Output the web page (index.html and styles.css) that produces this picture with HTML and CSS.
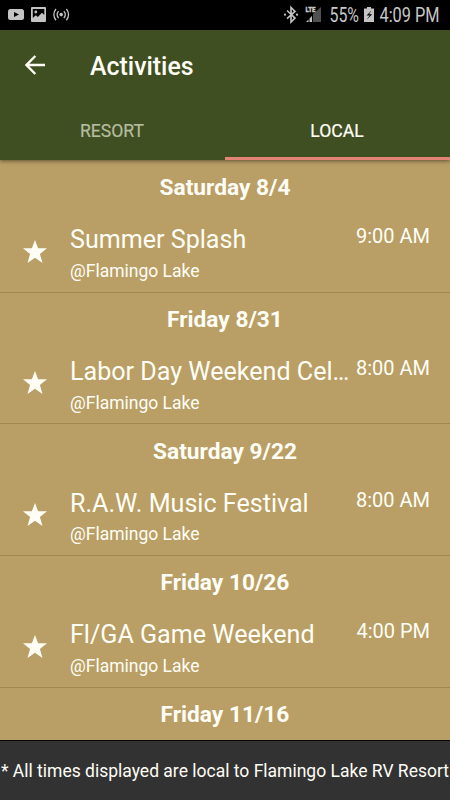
FILE: index.html
```
<!DOCTYPE html>
<html lang="en">

<head>
    <meta charset="UTF-8">
    <meta name="viewport" content="width=device-width, initial-scale=1.0">
    <title>Activities</title>
    <link rel="stylesheet" href="styles.css">
</head>

<body>
    <svg width="0" height="0" class="defs">
        <symbol id="star" viewBox="0 0 24 24">
            <path d="M12 0l3.1 8.3H24l-7.1 5.6 2.6 9.1L12 17.8 4.5 23l2.6-9.1L0 8.3h8.9z" />
        </symbol>
    </svg>

    <!-- Phone status bar -->
    <div class="status-bar">
        <svg class="status-left" width="80" height="30" viewBox="0 0 80 30">
            <rect x="8" y="9" width="16" height="11" rx="2.5" fill="#c4c4c4" />
            <path d="M14 12l5 2.5-5 2.5z" fill="#000" />
            <path fill="#c4c4c4" fill-rule="evenodd" d="M32 7h13a1 1 0 0 1 1 1v13a1 1 0 0 1-1 1H32a1 1 0 0 1-1-1V8a1 1 0 0 1 1-1zm.8 2v9l3-2.8 2 1.8 4.2-4.2 2.3 2.2V9z" />
            <circle cx="35.8" cy="12" r="1.4" fill="#c4c4c4" />
            <circle cx="61.2" cy="14.6" r="1.8" fill="#c4c4c4" />
            <path d="M58.6 11.2a4.6 4.6 0 0 0 0 6.8M63.8 11.2a4.6 4.6 0 0 1 0 6.8M56 9a8.4 8.4 0 0 0 0 11.2M66.4 9a8.4 8.4 0 0 1 0 11.2" fill="none" stroke="#c4c4c4" stroke-width="1.3" />
        </svg>
        <svg class="status-right" width="170" height="30" viewBox="280 0 170 30">
            <path d="M287 10.5l8 7.6-4 3.9V7.5l4 3.9-8 7.2" fill="none" stroke="#c4c4c4" stroke-width="1.6" />
            <circle cx="285" cy="14.7" r="1.1" fill="#c4c4c4" />
            <circle cx="297" cy="14.7" r="1.1" fill="#c4c4c4" />
            <text class="lte" x="305.5" y="11.7" textLength="10" lengthAdjust="spacingAndGlyphs">LTE</text>
            <path d="M321 7v15h-8v-8z" fill="#505050" />
            <path d="M306 22l2.5-2.5V22zM309.5 22v-3.5l2.5-2.5v6z" fill="#c4c4c4" />
            <text class="status-text" x="329.5" y="22" textLength="29.5" lengthAdjust="spacingAndGlyphs">55%</text>
            <path d="M367 7h4v1.5h3V22h-10V8.5h3z" fill="#c4c4c4" />
            <path d="M371.5 10.5l-5 5h3.2l-3 4.3 5.5-5.6h-3z" fill="#000" />
            <text class="status-text" x="379.5" y="22" textLength="60" lengthAdjust="spacingAndGlyphs">4:09 PM</text>
        </svg>
    </div>

    <header class="app-bar">
        <div class="toolbar">
            <svg class="back" width="20" height="20" viewBox="0 0 20 20">
                <path d="M20 10H1.8M10.3 1L1.5 10l8.8 9" />
            </svg>
            <h1>Activities</h1>
        </div>
        <nav class="tabs">
            <div class="tab"><span>RESORT</span></div>
            <div class="tab active"><span>LOCAL</span></div>
        </nav>
    </header>

    <main class="list">
        <section class="day">
            <h2>Saturday 8/4</h2>
            <div class="event">
                <svg class="star"><use href="#star" /></svg>
                <div class="info">
                    <div class="name">Summer Splash</div>
                    <div class="place">@Flamingo Lake</div>
                </div>
                <div class="time">9:00 AM</div>
            </div>
        </section>
        <section class="day">
            <h2>Friday 8/31</h2>
            <div class="event">
                <svg class="star"><use href="#star" /></svg>
                <div class="info">
                    <div class="name">Labor Day Weekend Cel…</div>
                    <div class="place">@Flamingo Lake</div>
                </div>
                <div class="time">8:00 AM</div>
            </div>
        </section>
        <section class="day">
            <h2>Saturday 9/22</h2>
            <div class="event">
                <svg class="star"><use href="#star" /></svg>
                <div class="info">
                    <div class="name">R.A.W. Music Festival</div>
                    <div class="place">@Flamingo Lake</div>
                </div>
                <div class="time">8:00 AM</div>
            </div>
        </section>
        <section class="day">
            <h2>Friday 10/26</h2>
            <div class="event">
                <svg class="star"><use href="#star" /></svg>
                <div class="info">
                    <div class="name">Fl/GA Game Weekend</div>
                    <div class="place">@Flamingo Lake</div>
                </div>
                <div class="time">4:00 PM</div>
            </div>
        </section>
        <section class="day">
            <h2>Friday 11/16</h2>
        </section>
    </main>

    <footer class="note">* All times displayed are local to Flamingo Lake RV Resort</footer>
</body>

</html>
```

FILE: styles.css
```
* {
    margin: 0;
    padding: 0;
    box-sizing: border-box;
}

body {
    font-family: Roboto, sans-serif;
    background-color: #b99f65;
    color: #fffef6;
    width: 450px;
    height: 800px;
    display: flex;
    flex-direction: column;
    overflow: hidden;
}

.defs {
    position: absolute;
}

.status-bar {
    height: 30px;
    flex-shrink: 0;
    background-color: #000;
    display: flex;
    justify-content: space-between;
}

.status-text {
    font-size: 19.5px;
    fill: #c8c8c8;
}

.lte {
    font-size: 7px;
    font-weight: 900;
    fill: #c8c8c8;
    stroke: #c8c8c8;
    stroke-width: 0.3px;
}

.app-bar {
    height: 130px;
    flex-shrink: 0;
    background-color: #404f21;
    box-shadow: 0 1px 4px rgba(0, 0, 0, 0.5);
    z-index: 1;
}

.toolbar {
    height: 70px;
    display: flex;
    align-items: center;
    padding-left: 25px;
}

.back {
    fill: none;
    stroke: #fffef6;
    stroke-width: 2.4;
}

.toolbar h1 {
    margin-left: 45px;
    padding-top: 2px;
    font-size: 24.9px;
    font-weight: 500;
}

.tabs {
    display: flex;
    height: 60px;
}

.tab {
    flex: 1;
    display: flex;
    align-items: center;
    justify-content: center;
    border-bottom: 3px solid transparent;
    padding-top: 4px;
    font-size: 17.6px;
    color: #b5bda0;
    -webkit-text-stroke: 0.2px;
}

.tab span {
    margin-left: -1px;
}

.tab.active {
    color: #fffef6;
    border-bottom-color: #e38476;
}

.list {
    flex: 1;
    overflow: hidden;
    padding-top: 0.3px;
}

.day {
    height: 131.7px;
}

.day h2 {
    height: 55px;
    line-height: 55px;
    font-size: 22.7px;
    font-weight: 700;
    text-align: center;
}

.event {
    height: 77.5px;
    display: flex;
    border-bottom: 1px solid #a0864f;
}

.star {
    width: 24px;
    height: 24px;
    margin: 24.3px 0 0 23px;
    flex-shrink: 0;
    fill: #fffef6;
}

.info {
    width: 285px;
    padding-left: 23px;
    white-space: nowrap;
}

.name {
    font-size: 25.1px;
    line-height: 30px;
    padding-top: 10px;
}

.place {
    font-size: 17.5px;
    line-height: 20px;
    margin-top: 5.7px;
}

.time {
    width: 98px;
    padding-top: 9px;
    text-align: right;
    font-size: 20px;
    line-height: 24px;
    white-space: nowrap;
}

.note {
    height: 60px;
    flex-shrink: 0;
    background-color: #323232;
    border-top: 1px solid #000;
    line-height: 60px;
    font-size: 17.5px;
    text-align: center;
    white-space: nowrap;
}
```
